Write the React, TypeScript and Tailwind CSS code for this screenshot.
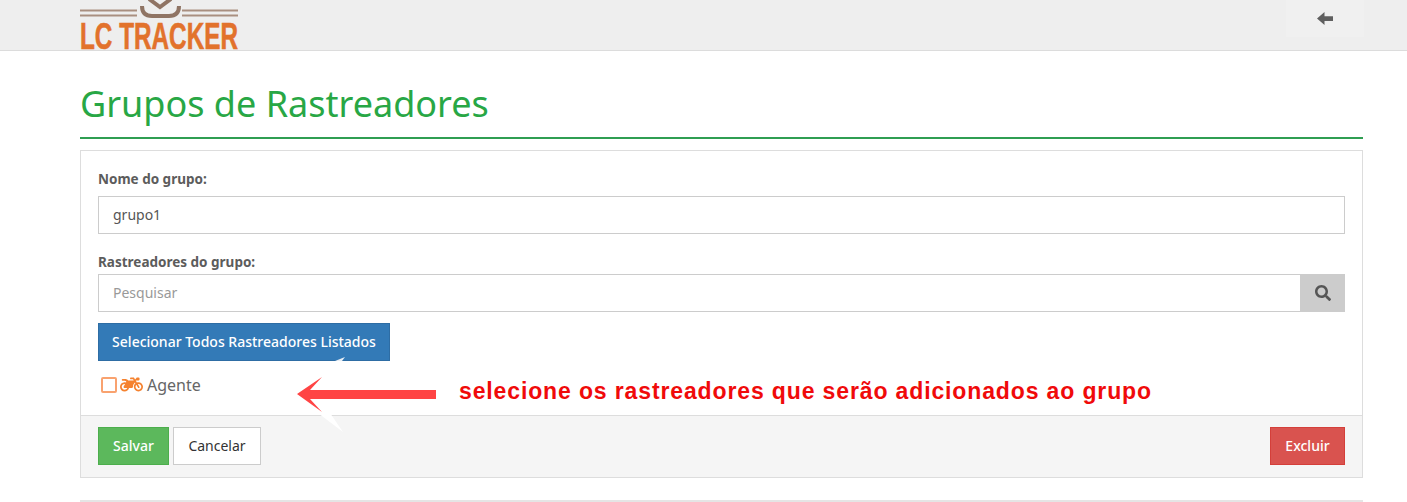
import { FaMotorcycle, FaSearch } from "react-icons/fa";

const Logo = () => {
  return (
    <div className="relative h-[50px] w-[160px]">
      <svg className="absolute left-0 top-0" width="160" height="24" viewBox="0 0 160 24" fill="none">
        <path d="M0 10.5H57M0 15.5H57M102 10.5H158M102 15.5H158" stroke="#a98f80" strokeWidth="2" />
        <path d="M62 6c0 7 4 10 10 10h17c6 0 10-3 10-10" stroke="#8f7464" strokeWidth="4" />
        <path d="M69 -1l11 8 11-8" stroke="#8f7464" strokeWidth="4" />
      </svg>
      <div className="absolute left-0 top-[18px] w-[234px] origin-left scale-x-[0.675] whitespace-nowrap font-['Liberation_Sans',sans-serif] text-[36px] font-bold leading-[38px] text-[#e2722c] [-webkit-text-stroke:0.6px_#e2722c]">
        LC TRACKER
      </div>
    </div>
  );
};

const App = () => {
  return (
    <div className="relative h-[502px] overflow-hidden bg-white font-['Noto_Sans',sans-serif] text-[#555]">
      <header className="h-[51px] border-b border-[#dcdcdc] bg-[#eeeeee] pl-[80px] pr-[43px]">
        <div className="flex items-start justify-between">
          <Logo />
          <div className="flex h-[37px] w-[78px] items-center justify-center bg-[#f0f0f0]">
            <svg width="16" height="13" viewBox="0 0 16 13" className="text-[#5f5f5f]">
              <path d="M0 6.5L7.5 0v4.2H16v4.8H7.5V13z" fill="currentColor" />
            </svg>
          </div>
        </div>
      </header>

      <main className="ml-[80px] mr-[44px]">
        <h1 className="h-[88px] border-b-2 border-[#2f9e52] pt-[29px] text-[36px] leading-[48px] text-[#28a745]">
          Grupos de Rastreadores
        </h1>

        <section className="mt-[11px] border border-[#dddddd]">
          <div className="h-[264px] px-[17px] pt-[18px]">
            <label className="block text-[13.5px] font-bold leading-[20px] text-[#5c5c5c]">Nome do grupo:</label>
            <div className="mt-[7px] flex h-[38px] items-center border border-[#cccccc] px-[14px] pb-px text-[14px] text-[#555]">
              grupo1
            </div>

            <label className="mt-[18px] block text-[13.5px] font-bold leading-[20px] text-[#5c5c5c]">
              Rastreadores do grupo:
            </label>
            <div className="mt-[2px] flex h-[38px] border border-[#cccccc]">
              <div className="flex flex-1 items-center px-[14px] pb-px text-[14px] text-[#999]">Pesquisar</div>
              <div className="-m-px flex w-[45px] items-center justify-center bg-[#cccccc]">
                <FaSearch size={16} className="text-[#555]" />
              </div>
            </div>

            <button className="mt-[11px] flex h-[38px] w-[292px] items-center justify-center border border-[#2e6da4] bg-[#337ab7] pb-px text-[14px] font-medium text-white">
              Selecionar Todos Rastreadores Listados
            </button>

            <div className="mt-[12px] flex items-center pl-[3px]">
              <span className="h-[16px] w-[16px] rounded-[2px] border-2 border-[#f9a26f]" />
              <FaMotorcycle size={23} className="ml-[3px] text-[#f5822f]" />
              <span className="ml-[4px] text-[16px] leading-[22px] text-[#666]">Agente</span>
            </div>
          </div>

          <div className="flex h-[62px] items-center justify-between border-t border-[#dddddd] bg-[#f5f5f5] px-[17px] pb-[2px]">
            <div className="flex gap-[4px]">
              <button className="h-[38px] w-[71px] border border-[#4cae4c] bg-[#5cb85c] pb-px text-[14px] font-medium text-white">
                Salvar
              </button>
              <button className="h-[38px] w-[88px] border border-[#cccccc] bg-white pb-px text-[14px] text-[#333]">
                Cancelar
              </button>
            </div>
            <button className="h-[38px] w-[75px] border border-[#d43f3a] bg-[#d9534f] pb-px text-[14px] font-medium text-white">
              Excluir
            </button>
          </div>
        </section>

        <hr className="mt-[22px] border-t-2 border-[#e5e5e5]" />
      </main>

      {/* annotation pasted over the screenshot */}
      <svg className="absolute left-[290px] top-[350px]" width="160" height="90" viewBox="0 0 160 90">
        <path d="M55 7L45 11h7z" fill="#e8eef5" />
        <path d="M28 63l25 19-13-19z" fill="#fff" />
        <path d="M7 44L32 27 20 40h126v9H20l12 13z" fill="#ff4444" />
      </svg>
      <div className="absolute left-[459px] top-[377px] whitespace-nowrap font-['Liberation_Sans',sans-serif] text-[23px] font-bold leading-[28px] tracking-[0.87px] text-[#f00a0a]">
        selecione os rastreadores que serão adicionados ao grupo
      </div>
    </div>
  );
};

export default App;
